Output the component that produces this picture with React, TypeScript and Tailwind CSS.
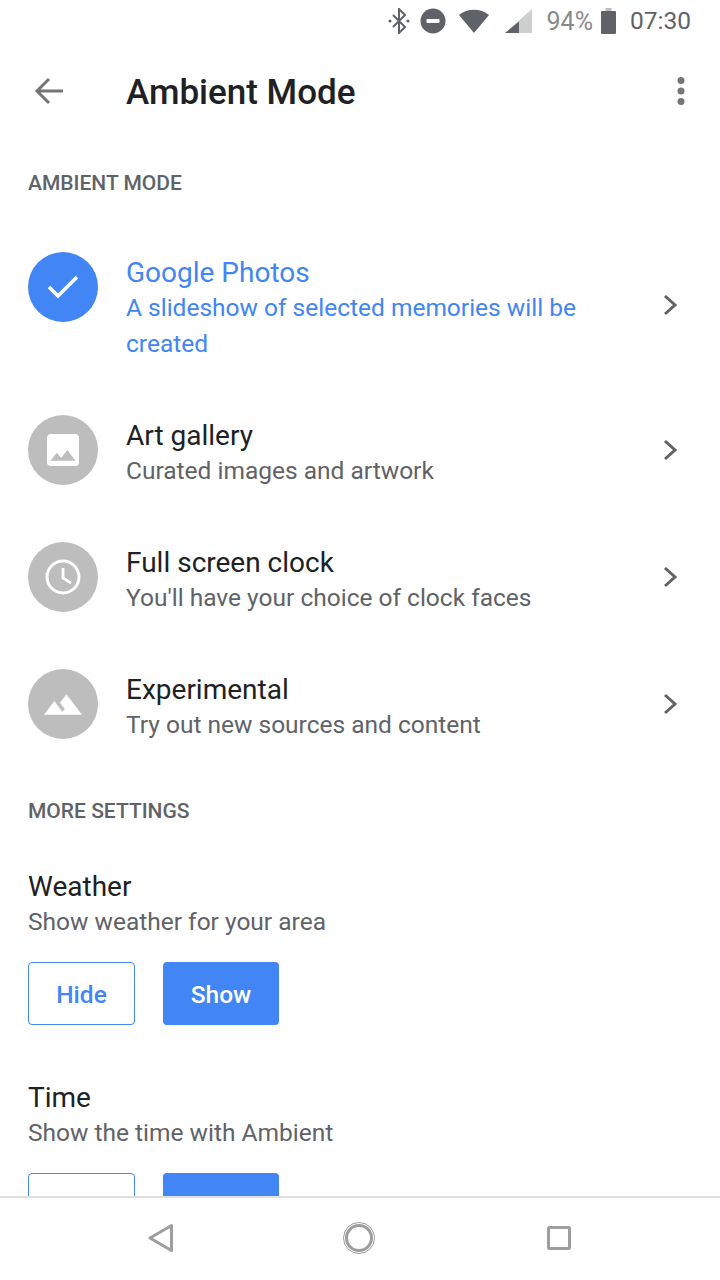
import type { ReactNode } from 'react';

const rows = [
  { title: 'Art gallery', sub: 'Curated images and artwork', icon: 'image' },
  { title: 'Full screen clock', sub: "You'll have your choice of clock faces", icon: 'clock' },
  { title: 'Experimental', sub: 'Try out new sources and content', icon: 'mountain' },
];

function Chevron() {
  return (
    <svg viewBox="0 0 18 26" className="h-[26px] w-[18px]">
      <path d="M3 4l10 9-10 9" fill="none" stroke="#5f6368" strokeWidth="3" />
    </svg>
  );
}

function RowIcon({ icon }: { icon: string }) {
  if (icon === 'image') {
    return (
      <svg viewBox="3 3 18 18" className="h-8 w-8" fill="#fff">
        <path d="M21 19V5c0-1.100-.9-2-2-2H5c-1.100 0-2 .9-2 2v14c0 1.100.9 2 2 2h14c1.100 0 2-.9 2-2zM8.500 13.500l2.500 3.010L14.500 12l4.500 6H5l3.500-4.500z" />
      </svg>
    );
  }
  if (icon === 'clock') {
    return (
      <svg viewBox="0 0 36 36" className="h-9 w-9">
        <circle cx="18" cy="18" r="16" fill="none" stroke="#fff" strokeWidth="3" />
        <path d="M18 9v10l8 5" fill="none" stroke="#fff" strokeWidth="2.800" />
      </svg>
    );
  }
  return (
    <svg viewBox="1 6 22 12" className="h-[21px] w-[38px]" fill="#fff">
      <path d="M14 6l-3.750 5 2.850 3.800-1.600 1.200C9.810 13.750 7 10 7 10l-6 8h22L14 6z" />
    </svg>
  );
}

function OptionRow({
  title,
  sub,
  icon,
  active,
}: {
  title: string;
  sub: string;
  icon: ReactNode;
  active?: boolean;
}) {
  return (
    <div className="flex items-start pb-[53px] pl-[28px] pr-[40px]">
      <div
        className={
          active
            ? 'flex h-[70px] w-[70px] shrink-0 items-center justify-center rounded-full bg-[#4285f4]'
            : 'flex h-[70px] w-[70px] shrink-0 items-center justify-center rounded-full bg-[#bdbdbd]'
        }
      >
        {icon}
      </div>
      <div className="ml-[28px] flex-1 pt-[3px]">
        <div className={active ? 'text-[28px] leading-[35px] text-[#4285f4]' : 'text-[28px] leading-[35px] text-[#202124]'}>
          {title}
        </div>
        <div className={active ? 'w-[470px] text-[24.500px] leading-[36px] text-[#4285f4]' : 'text-[24.500px] leading-[36px] text-[#5f6368]'}>
          {sub}
        </div>
      </div>
      <div className={active ? 'mt-[40px]' : 'mt-[22px]'}>
        <Chevron />
      </div>
    </div>
  );
}

function SettingBlock({ title, sub }: { title: string; sub: string }) {
  return (
    <div className="pb-[55px] pl-[28px]">
      <div className="text-[28px] leading-[36px] text-[#202124]">{title}</div>
      <div className="text-[24.500px] leading-[34px] text-[#5f6368]">{sub}</div>
      <div className="mt-[23px] flex gap-[28px]">
        <button className="h-[63px] w-[107px] rounded-[4px] border border-[#4285f4] pt-[3px] text-[24.500px] font-medium text-[#4285f4]">
          Hide
        </button>
        <button className="h-[63px] w-[116px] rounded-[4px] bg-[#4285f4] pt-[3px] text-[24.500px] font-medium text-white">
          Show
        </button>
      </div>
    </div>
  );
}

export default function App() {
  return (
    <div className="flex h-[1280px] w-[720px] flex-col overflow-hidden bg-white font-['Roboto',sans-serif]">
      {/* status bar */}
      <div className="flex h-[42px] items-center justify-end pr-[29px]">
        <svg viewBox="0 0 22 26" className="h-[26px] w-[22px]" fill="none" stroke="#5f6368" strokeWidth="2">
          <path d="M5 7l12 12-6 6V1l6 6L5 19" />
          <circle cx="2" cy="13" r="1.500" fill="#5f6368" stroke="none" />
          <circle cx="20" cy="13" r="1.500" fill="#5f6368" stroke="none" />
        </svg>
        <svg viewBox="0 0 26 26" className="ml-[10px] h-[26px] w-[26px]">
          <circle cx="13" cy="13" r="12.500" fill="#5f6368" />
          <rect x="6.500" y="11" width="13" height="4" rx="1" fill="#fff" />
        </svg>
        <svg viewBox="0 0 32 26" className="ml-[12px] h-[26px] w-[32px]">
          <path d="M16 25L1 7c8-7 22-7 30 0z" fill="#5f6368" />
        </svg>
        <svg viewBox="0 0 28 26" className="ml-[14px] h-[26px] w-[28px]">
          <path d="M28 1v24H1z" fill="#cfcfcf" />
          <path d="M15 13.500V25H1z" fill="#5f6368" />
        </svg>
        <span className="ml-[15px] text-[25px] leading-none text-[#8a8a8a]">94%</span>
        <svg viewBox="0 0 15 26" className="ml-[8px] h-[26px] w-[15px]">
          <rect x="4.500" y="0" width="6" height="3" fill="#bdbdbd" />
          <rect x="0" y="3" width="15" height="23" rx="1" fill="#5f6368" />
        </svg>
        <span className="ml-[14px] text-[24.500px] leading-none text-[#5f6368]">07:30</span>
      </div>

      {/* toolbar */}
      <div className="flex h-[98px] items-center pr-[34px]">
        <div className="flex w-[126px] justify-start pl-[34px]">
          <svg viewBox="0 0 30 28" className="h-[28px] w-[30px]">
            <path d="M29 14H3M15 2L3 14l12 12" fill="none" stroke="#757575" strokeWidth="3" />
          </svg>
        </div>
        <h1 className="flex-1 pt-[5px] text-[35px] font-medium text-[#202124]">Ambient Mode</h1>
        <svg viewBox="0 0 10 30" className="h-[30px] w-[10px]" fill="#757575">
          <circle cx="5" cy="4.500" r="3.500" />
          <circle cx="5" cy="15" r="3.500" />
          <circle cx="5" cy="25.500" r="3.500" />
        </svg>
      </div>

      {/* scrolling content */}
      <div className="min-h-0 flex-1 overflow-hidden">
        <div className="mt-[30px] pl-[28px] text-[21px] leading-[26px] font-medium text-[#5f6368]">AMBIENT MODE</div>
        <div className="mt-[56px]">
          <OptionRow
            active
            title="Google Photos"
            sub="A slideshow of selected memories will be created"
            icon={
              <svg viewBox="0 0 32 26" className="h-[26px] w-[32px]">
                <path d="M2 13l9 9L30 3" fill="none" stroke="#fff" strokeWidth="3.500" />
              </svg>
            }
          />
          {rows.map((r) => (
            <OptionRow key={r.title} title={r.title} sub={r.sub} icon={<RowIcon icon={r.icon} />} />
          ))}
        </div>
        <div className="mt-[2px] pl-[28px] text-[21px] leading-[26px] font-medium text-[#5f6368]">MORE SETTINGS</div>
        <div className="mt-[45px]">
          <SettingBlock title="Weather" sub="Show weather for your area" />
          <SettingBlock title="Time" sub="Show the time with Ambient" />
        </div>
      </div>

      {/* nav bar */}
      <div className="flex h-[84px] shrink-0 items-center border-t-2 border-[#e0e0e0] pb-[2px] pl-[148px]">
        <svg viewBox="0 0 26 30" className="h-[30px] w-[26px]">
          <path d="M23.500 2.500v25L2 15z" fill="none" stroke="#9e9e9e" strokeWidth="3" strokeLinejoin="round" />
        </svg>
        <svg viewBox="0 0 34 34" className="ml-[168px] h-[34px] w-[34px]">
          <circle cx="17" cy="17" r="15.500" fill="none" stroke="#9e9e9e" strokeWidth="1" />
          <circle cx="17" cy="17" r="12.500" fill="none" stroke="#9e9e9e" strokeWidth="3" />
        </svg>
        <svg viewBox="0 0 26 26" className="ml-[170px] h-[26px] w-[26px]">
          <rect x="2.500" y="2.500" width="21" height="21" rx="1" fill="none" stroke="#9e9e9e" strokeWidth="3" />
        </svg>
      </div>
    </div>
  );
}
